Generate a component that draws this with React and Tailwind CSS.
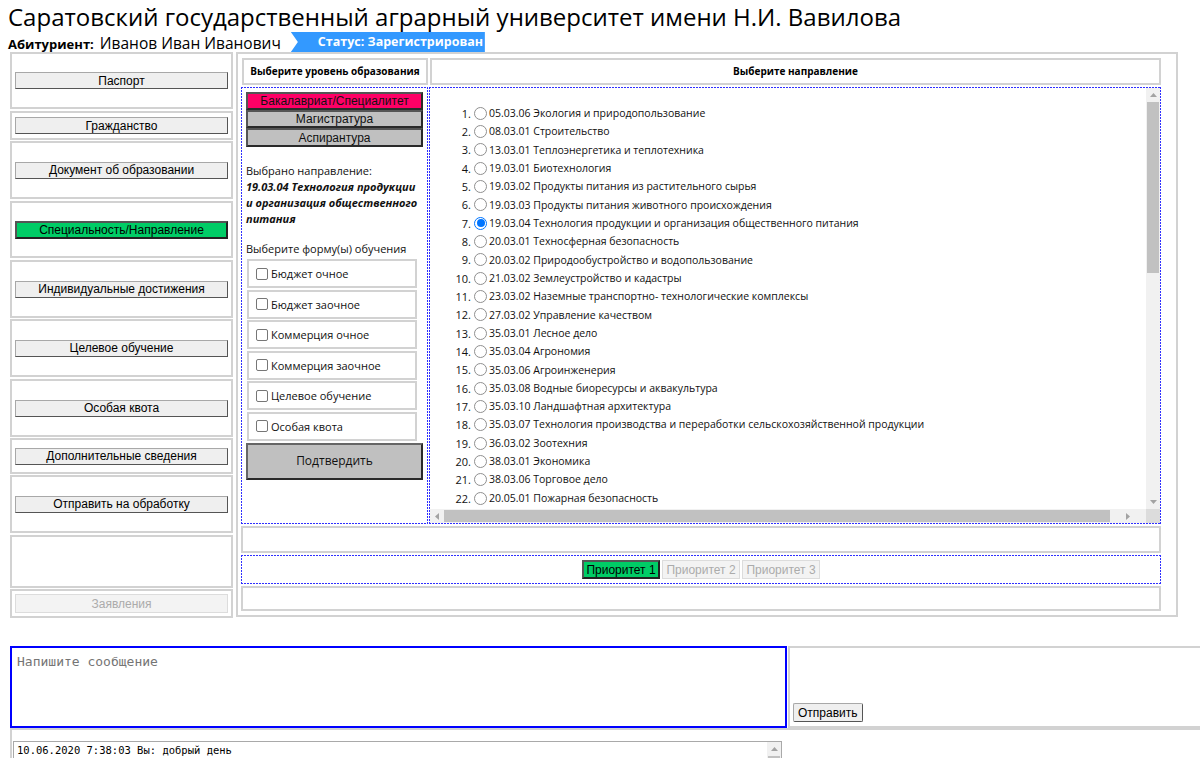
import React from 'react';

const SIDE = [
  { label: 'Паспорт', h: 'h-[57px]', mt: '' },
  { label: 'Гражданство', h: 'h-[29px]', mt: 'mt-[2px]' },
  { label: 'Документ об образовании', h: 'h-[58px]', mt: 'mt-[1px]' },
  { label: 'Специальность/Направление', h: 'h-[57px]', mt: 'mt-[2px]', active: true },
  { label: 'Индивидуальные достижения', h: 'h-[58px]', mt: 'mt-[2px]' },
  { label: 'Целевое обучение', h: 'h-[58px]', mt: 'mt-[1px]' },
  { label: 'Особая квота', h: 'h-[58px]', mt: 'mt-[2px]' },
  { label: 'Дополнительные сведения', h: 'h-[36px]', mt: 'mt-[1px]' },
  { label: 'Отправить на обработку', h: 'h-[58px]', mt: 'mt-[1px]' },
  { label: null, h: 'h-[53px]', mt: 'mt-[2px]' },
  { label: 'Заявления', h: 'h-[29px]', mt: 'mt-[1px]', disabled: true },
];

const LIST = [
  '05.03.06 Экология и природопользование',
  '08.03.01 Строительство',
  '13.03.01 Теплоэнергетика и теплотехника',
  '19.03.01 Биотехнология',
  '19.03.02 Продукты питания из растительного сырья',
  '19.03.03 Продукты питания животного происхождения',
  '19.03.04 Технология продукции и организация общественного питания',
  '20.03.01 Техносферная безопасность',
  '20.03.02 Природообустройство и водопользование',
  '21.03.02 Землеустройство и кадастры',
  '23.03.02 Наземные транспортно- технологические комплексы',
  '27.03.02 Управление качеством',
  '35.03.01 Лесное дело',
  '35.03.04 Агрономия',
  '35.03.06 Агроинженерия',
  '35.03.08 Водные биоресурсы и аквакультура',
  '35.03.10 Ландшафтная архитектура',
  '35.03.07 Технология производства и переработки сельскохозяйственной продукции',
  '36.03.02 Зоотехния',
  '38.03.01 Экономика',
  '38.03.06 Торговое дело',
  '20.05.01 Пожарная безопасность',
];

const FORMS = [
  'Бюджет очное',
  'Бюджет заочное',
  'Коммерция очное',
  'Коммерция заочное',
  'Целевое обучение',
  'Особая квота',
];

const DOTTED =
  '[background-image:linear-gradient(90deg,#3030ff_60%,transparent_60%),linear-gradient(90deg,#3030ff_60%,transparent_60%),linear-gradient(180deg,#3030ff_60%,transparent_60%),linear-gradient(180deg,#3030ff_60%,transparent_60%)] [background-size:3px_1px,3px_1px,1px_3px,1px_3px] [background-position:0_0,0_100%,0_0,100%_0] [background-repeat:repeat-x,repeat-x,repeat-y,repeat-y]';

function SideBtn({ label, active, disabled }) {
  if (active) {
    return (
      <div className="h-[18px] flex items-center justify-center text-[12px] leading-none font-['Liberation_Sans',Arial,sans-serif] bg-[#00cc66] border-2 border-[#222] border-t-[#555] border-l-[#555] text-black">
        {label}
      </div>
    );
  }
  if (disabled) {
    return (
      <div className="h-[19px] flex items-center justify-center text-[12px] leading-none font-['Liberation_Sans',Arial,sans-serif] bg-[#f3f3f3] border border-[#dcdcdc] text-[#ababab]">
        {label}
      </div>
    );
  }
  return (
    <div className="h-[17px] flex items-center justify-center text-[12px] leading-none font-['Liberation_Sans',Arial,sans-serif] bg-[#efefef] border border-[#a8a8a8] border-b-[#555] border-r-[#555] text-black">
      {label}
    </div>
  );
}

function Tri({ dir }) {
  const pts = {
    up: '0,4 3.5,0 7,4',
    down: '0,0 7,0 3.5,4',
    left: '4,0 4,7 0,3.5',
    right: '0,0 4,3.5 0,7',
  }[dir];
  const w = dir === 'up' || dir === 'down' ? 7 : 4;
  const h = dir === 'up' || dir === 'down' ? 4 : 7;
  return (
    <svg width={w} height={h} viewBox={`0 0 ${w} ${h}`}>
      <polygon points={pts} fill="#a3a3a3" />
    </svg>
  );
}

function Radio({ checked }) {
  if (checked) {
    return (
      <div className="w-[13px] h-[13px] rounded-full border border-[#0075ff] bg-white flex items-center justify-center shrink-0">
        <div className="w-[8px] h-[8px] rounded-full bg-[#0075ff]" />
      </div>
    );
  }
  return <div className="w-[13px] h-[13px] rounded-full border border-[#8f8f8f] bg-white shrink-0" />;
}

export default function App() {
  return (
    <div className="w-[1200px] h-[758px] overflow-hidden bg-white text-black font-['Open_Sans',sans-serif]">
      {/* Title */}
      <div className="pl-[8px] pt-[1px] h-[32px] text-[24px] leading-[31px] whitespace-nowrap">
        Саратовский государственный аграрный университет имени Н.И. Вавилова
      </div>
      {/* Applicant row */}
      <div className="flex items-center h-[20px] pl-[8px] whitespace-nowrap">
        <span className="font-bold text-[13px] leading-[20px] pt-[3px]">Абитуриент:</span>
        <span className="ml-[6px] text-[15.5px] leading-[20px] pt-[1px]">Иванов Иван Иванович</span>
        <div className="ml-[10px] w-[194px] h-[20px] bg-[#3399ff] [clip-path:polygon(0_0,100%_0,100%_100%,0_100%,7px_50%)] flex items-center overflow-hidden pl-[27px] text-white font-bold text-[12.5px] leading-none">
          Статус: Зарегистрирован
        </div>
      </div>

      {/* Main */}
      <div className="flex items-start">
        {/* Sidebar */}
        <div className="ml-[10px] w-[223px] flex flex-col">
          {SIDE.map((s, i) => (
            <div
              key={i}
              className={`${s.h} ${s.mt} border-2 border-[#d2d2d2] px-[3px] flex flex-col justify-center`}
            >
              {s.label && <SideBtn label={s.label} active={s.active} disabled={s.disabled} />}
            </div>
          ))}
        </div>

        {/* Content panel */}
        <div className="ml-[3px] w-[942px] h-[565px] border-2 border-[#d2d2d2] pl-[3px] pt-[4px]">
          <div className="grid grid-cols-[187px_732px] gap-x-[1px] gap-y-[2px]">
            <div className="h-[27px] ml-[1px] border-2 border-[#d2d2d2] flex items-center justify-center font-bold text-[10px] whitespace-nowrap">
              Выберите уровень образования
            </div>
            <div className="h-[27px] ml-[1px] border-2 border-[#d2d2d2] flex items-center justify-center font-bold text-[10px] whitespace-nowrap">
              Выберите направление
            </div>

            {/* Level panel */}
            <div className={`h-[437px] px-[5px] pt-[5px] ${DOTTED}`}>
              <div className="flex flex-col font-['Liberation_Sans',Arial,sans-serif] text-[12px] leading-none">
                <div className="h-[18px] flex items-center justify-center bg-[#ff0066] border-2 border-[#2a2a2a] border-t-[#555] border-l-[#555] text-[#111]">
                  Бакалавриат/Специалитет
                </div>
                <div className="h-[18px] flex items-center justify-center bg-[#c0c0c0] border-2 border-[#2a2a2a] border-t-[#555] border-l-[#555] text-[#111]">
                  Магистратура
                </div>
                <div className="h-[19px] flex items-center justify-center bg-[#c0c0c0] border-2 border-[#2a2a2a] border-t-[#555] border-l-[#555] text-[#111]">
                  Аспирантура
                </div>
              </div>
              <div className="mt-[16px] text-[11px] leading-[16px] text-[#111]">Выбрано направление:</div>
              <div className="text-[11px] leading-[16px] font-bold italic text-[#111] whitespace-nowrap">
                19.03.04 Технология продукции
                <br />
                и организация общественного
                <br />
                питания
              </div>
              <div className="mt-[14px] text-[11px] leading-[16px] text-[#111]">Выберите форму(ы) обучения</div>
              <div className="mt-[2px] flex flex-col gap-[1.5px]">
                {FORMS.map((f) => (
                  <div key={f} className="ml-[1px] w-[170px] h-[29px] border-2 border-[#d2d2d2] flex items-center pl-[7px]">
                    <div className="w-[12px] h-[12px] border border-[#767676] rounded-[2px] bg-white shrink-0" />
                    <span className="ml-[3px] text-[11px] leading-none text-[#111]">{f}</span>
                  </div>
                ))}
              </div>
              <div className="mt-[2px] h-[37px] flex items-center justify-center bg-[#c0c0c0] border-2 border-[#2a2a2a] border-t-[#666] border-l-[#666] text-[12px] text-[#111]">
                Подтвердить
              </div>
            </div>

            {/* Direction list panel */}
            <div className={`h-[437px] p-[1px] flex flex-col ${DOTTED}`}>
              <div className="flex h-[421px]">
                <div className="flex-1 overflow-hidden pt-[16px] bg-white">
                  {LIST.map((t, i) => (
                    <div key={i} className="h-[18.33px] flex items-center text-[10.5px] leading-none text-[#111] whitespace-nowrap">
                      <span className="w-[41px] text-right text-[11px]">{i + 1}.</span>
                      <span className="ml-[3px]">
                        <Radio checked={i === 6} />
                      </span>
                      <span className="ml-[2px]">{t}</span>
                    </div>
                  ))}
                </div>
                <div className="w-[14px] bg-[#f1f1f1] flex flex-col items-center">
                  <div className="h-[14px] flex items-center justify-center">
                    <Tri dir="up" />
                  </div>
                  <div className="w-[12px] h-[171px] bg-[#c1c1c1]" />
                  <div className="flex-1" />
                  <div className="h-[14px] flex items-center justify-center">
                    <Tri dir="down" />
                  </div>
                </div>
              </div>
              <div className="flex h-[14px]">
                <div className="flex-1 bg-[#f1f1f1] flex items-center">
                  <div className="w-[14px] flex items-center justify-center">
                    <Tri dir="left" />
                  </div>
                  <div className="w-[666px] h-[12px] bg-[#c1c1c1]" />
                  <div className="flex-1 flex items-center justify-center">
                    <Tri dir="right" />
                  </div>
                </div>
                <div className="w-[14px] bg-[#dcdcdc]" />
              </div>
            </div>

            <div className="col-span-2 h-[27px] border-2 border-[#d2d2d2]" />
            <div className={`col-span-2 h-[29px] flex items-center justify-center gap-[2px] font-['Liberation_Sans',Arial,sans-serif] text-[12px] leading-none ${DOTTED}`}>
              <div className="w-[78px] h-[19px] flex items-center justify-center bg-[#00cc66] border-2 border-[#222] border-t-[#555] border-l-[#555] text-black">
                Приоритет 1
              </div>
              <div className="w-[78px] h-[19px] flex items-center justify-center bg-[#f3f3f3] border border-[#dcdcdc] text-[#ababab]">
                Приоритет 2
              </div>
              <div className="w-[78px] h-[19px] flex items-center justify-center bg-[#f3f3f3] border border-[#dcdcdc] text-[#ababab]">
                Приоритет 3
              </div>
            </div>
            <div className="col-span-2 h-[25px] border-2 border-[#d2d2d2]" />
          </div>
        </div>
      </div>

      {/* Message area */}
      <div className="mt-[28px] flex">
        <div className="ml-[10px] w-[777px] h-[82px] border-2 border-[#0000ff] pl-[5px] pt-[6px]">
          <div className="font-['DejaVu_Sans_Mono',monospace] text-[13px] leading-[16px] text-[#757575]">
            Напишите сообщение
          </div>
        </div>
        <div className="ml-[1px] flex-1 h-[82px] border-2 border-r-0 border-[#d2d2d2] flex items-end pl-[3px] pb-[4px]">
          <div className="h-[19px] px-[4px] flex items-center bg-[#efefef] border border-[#a8a8a8] border-b-[#555] border-r-[#555] rounded-[2px] font-['Liberation_Sans',Arial,sans-serif] text-[12px] leading-none">
            Отправить
          </div>
        </div>
      </div>
      <div className="ml-[10px] h-[60px] border-t-2 border-l-2 border-[#d2d2d2]">
        <div className="ml-[1px] mt-[11px] w-[769px] h-[60px] border border-[#a9a9a9] flex">
          <div className="flex-1 pl-[3px] pt-[2px] font-['DejaVu_Sans_Mono',monospace] text-[10.5px] leading-[13px] text-black">
            10.06.2020 7:38:03 Вы: добрый день
          </div>
          <div className="w-[14px] bg-[#f1f1f1] flex flex-col items-center">
            <div className="h-[14px] flex items-center justify-center">
              <Tri dir="up" />
            </div>
            <div className="w-[12px] h-[20px] bg-[#c1c1c1]" />
          </div>
        </div>
      </div>
    </div>
  );
}
